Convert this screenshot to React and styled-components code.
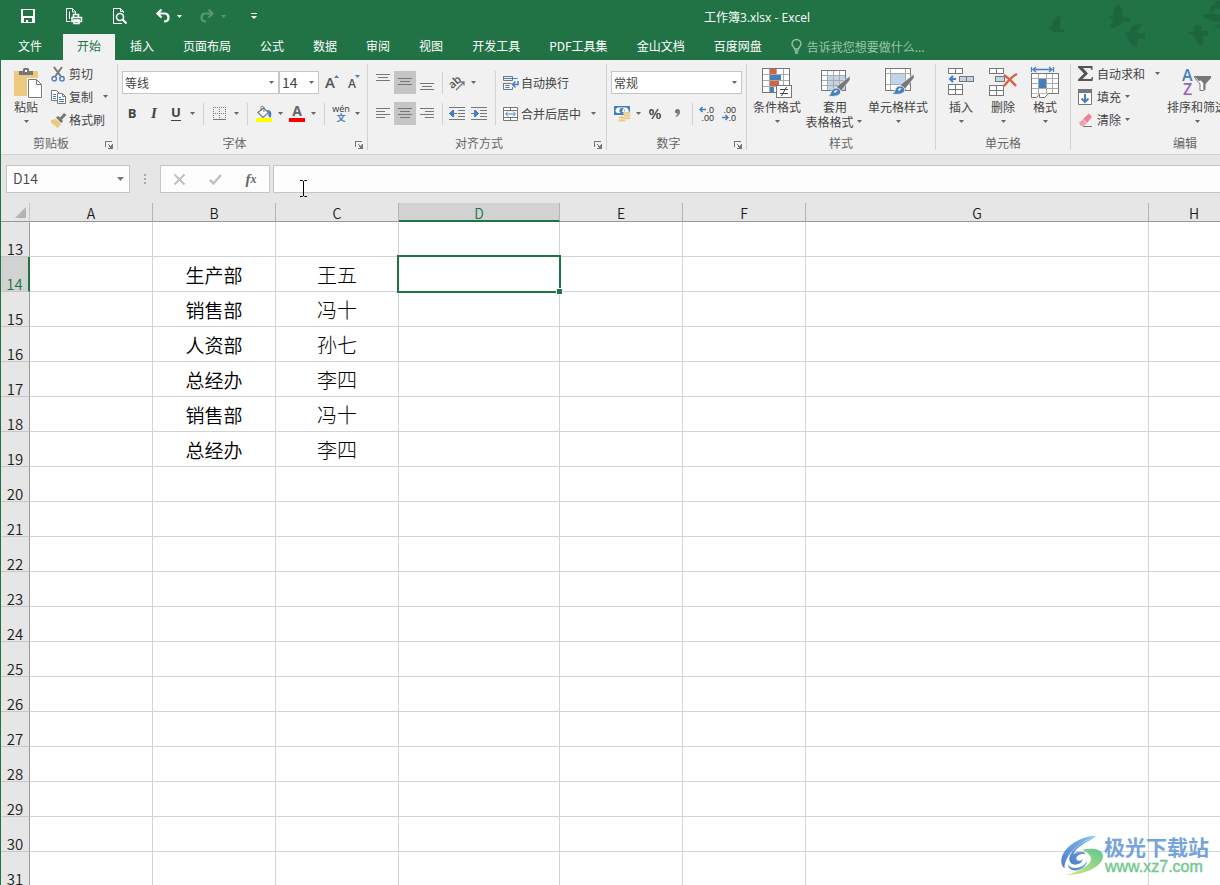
import React from "react"
import styled, { createGlobalStyle, css } from "styled-components"

const colors = {
  green: "#217346",
  greenDark: "#1d653e",
  ribbon: "#f1f1f1",
  chrome: "#e6e6e6",
  active: "#c5c5c5",
  header: "#d2d2d2",
  line: "#d4d4d4",
  border: "#c6c6c6",
  headerLine: "#999999",
  text: "#444444",
  label: "#666666",
  icon: "#777777",
  blue: "#4480bd",
  lightBlue: "#c0d4ea",
  sand: "#edc87e",
  red: "#d9603f",
}

const fonts = {
  ui: `"Noto Sans CJK SC", sans-serif`,
  title: `"Open Sans", "Noto Sans CJK SC", sans-serif`,
}

const GlobalStyle = createGlobalStyle`
  *, *::before, *::after {
    box-sizing: border-box;
  }

  body {
    margin: 0;
    font-family: ${fonts.ui};
    font-size: 12px;
    color: ${colors.text};
  }

  button, select, input {
    font: inherit;
    color: inherit;
    margin: 0;
    padding: 0;
    border: 0;
    border-radius: 0;
    background: none;
    outline: none;
  }

  svg {
    display: block;
    flex: none;
    overflow: visible;
  }
`

const Window = styled.div`
  position: relative;
  display: flex;
  flex-direction: column;
  height: 100vh;
  overflow: hidden;
  border-left: 1px solid ${colors.green};
  background: #ffffff;
`

const Header = styled.header`
  position: relative;
  flex: none;
  background: ${colors.green};
  color: #ffffff;
`

const Birds = styled.svg`
  position: absolute;
  top: 0;
  right: 0;
  overflow: hidden;
  fill: ${colors.greenDark};
`

const TitleBar = styled.div`
  position: relative;
  display: flex;
  align-items: center;
  height: 34px;
`

const QuickAccess = styled.div`
  display: flex;
  align-items: center;
  width: 293px;
  padding: 0 0 2px 14px;
  gap: 20px;
`

const QuickGroup = styled.div`
  display: flex;
  align-items: center;
  gap: 9px;
`

const QuickButton = styled.button`
  display: flex;
  align-items: center;
  justify-content: center;
  width: 26px;
  height: 24px;
`

const HistoryButton = styled.button`
  display: flex;
  align-items: center;
  gap: 4px;
  padding: 0 3px;
  height: 24px;
  opacity: ${props => (props.disabled ? 0.25 : 1)};
  color: #ffffff;
`

const DocTitle = styled.h1`
  flex: 1;
  margin: 0;
  font-family: ${fonts.title};
  font-size: 12px;
  font-weight: 400;
  text-align: center;
`

const Tabs = styled.nav`
  position: relative;
  display: flex;
  gap: 1px;
  height: 26px;
`

const Tab = styled.button`
  flex: none;
  padding: 0 14px 3px;
  line-height: 23px;

  ${props =>
    props.$file &&
    css`
      padding: 0 17px 3px;
      margin-right: 3px;
    `}

  ${props =>
    props.$active &&
    css`
      background: ${colors.ribbon};
      color: ${colors.green};
    `}
`

const TellMe = styled.button`
  display: flex;
  align-items: center;
  gap: 5px;
  padding: 0 0 1px 14px;
  line-height: 23px;
  color: #9cc3ab;
`

const RibbonBar = styled.div`
  display: flex;
  flex: none;
  height: 95px;
  overflow: hidden;
  background: ${colors.ribbon};
  border-bottom: 1px solid ${colors.header};
`

const Group = styled.section`
  display: flex;
  flex-direction: column;
  flex: none;
  width: ${props => props.$width}px;
  padding: 2px 0 3px;
`

const GroupBody = styled.div`
  display: flex;
  flex: 1;
  padding-left: ${props => props.$indent || 4}px;
`

const GroupFooter = styled.div`
  display: flex;
  align-items: center;
  height: 16px;
  color: ${colors.label};
`

const GroupLabel = styled.div`
  flex: 1;
  line-height: 16px;
  text-align: center;
`

const Launcher = styled.button`
  display: flex;
  justify-content: center;
  width: 16px;
  padding-top: 4px;
`

const Divider = styled.div`
  flex: none;
  width: 1px;
  margin: 4px 0;
  background: ${colors.header};
`

const BigButton = styled.button`
  display: flex;
  flex-direction: column;
  align-items: center;
  flex: none;
  width: ${props => props.$width}px;
  padding-top: 5px;
  line-height: 15px;
  white-space: nowrap;
`

const BigLine = styled.span`
  display: flex;
  align-items: center;
  height: 15px;
`

const Stack = styled.div`
  display: flex;
  flex-direction: column;
  align-items: flex-start;
  width: ${props => (props.$width ? `${props.$width}px` : "auto")};
  padding-left: ${props => props.$indent || 0}px;
`

const SmallButton = styled.button`
  display: flex;
  align-items: center;
  gap: ${props => props.$gap || 2}px;
  height: 23px;
  white-space: nowrap;
`

const Rows = styled.div`
  display: flex;
  flex-direction: column;
  gap: 8px;
  padding: 9px 0 0 ${props => props.$indent || 0}px;
`

const Row = styled.div`
  display: flex;
  align-items: center;
  height: 23px;
`

const ToolButton = styled.button`
  display: flex;
  align-items: center;
  justify-content: center;
  flex: none;
  width: 22px;
  height: 23px;
  padding-bottom: ${props => (props.$raised ? 2 : 0)}px;
  background: ${props => (props.$active ? colors.active : "none")};
`

const Letter = styled.span`
  font-family: "Open Sans", sans-serif;
  font-size: ${props => props.$size || 13}px;
  line-height: 16px;
  font-weight: ${props => (props.$regular ? 600 : 700)};
  border-bottom: ${props => (props.$underline ? "1px solid currentColor" : "0")};
`

const SerifLetter = styled(Letter)`
  font-family: "Liberation Serif", serif;
  font-style: italic;
`

const CaretBox = styled.span`
  display: flex;
  align-items: center;
  justify-content: center;
  flex: none;
  width: 11px;
  height: 15px;
  margin-left: ${props => props.$gap || 0}px;
`

const Rule = styled.div`
  flex: none;
  width: 1px;
  height: ${props => (props.$tall ? "54px" : "22px")};
  margin: ${props => (props.$tight ? "0 3px 0 4px" : "0 5px")};
  background: ${colors.header};
`

const RuleColumn = styled.div`
  padding-top: 9px;
`

const Combo = styled.label`
  display: grid;
  align-items: center;
  flex: none;
  width: ${props => props.$width}px;
  height: 23px;
  margin-left: ${props => props.$indent || 0}px;
  background: #ffffff;
  border: 1px solid ${colors.border};

  > * {
    grid-area: 1 / 1;
  }

  > span {
    justify-self: end;
    margin-right: 1px;
    pointer-events: none;
  }
`

const Select = styled.select`
  width: 100%;
  height: 21px;
  padding: 0 2px 1px;
  appearance: none;
  font-size: ${props => props.$size || 12}px;
`

const Spacer = styled.div`
  width: 3px;
`

const FormulaBar = styled.div`
  display: flex;
  flex: none;
  padding: 10px 0 10px 5px;
  background: ${colors.chrome};
`

const NameBox = styled.div`
  display: flex;
  align-items: center;
  width: 124px;
  height: 28px;
  padding-right: 5px;
  background: #fdfdfd;
  border: 1px solid ${colors.border};
`

const NameInput = styled.input`
  flex: 1;
  min-width: 0;
  padding: 0 0 2px 6px;
  font-size: 14px;
  font-weight: 350;
  line-height: 24px;
`

const Grip = styled.div`
  display: flex;
  align-items: center;
  justify-content: center;
  width: 30px;
`

const FormulaActions = styled.div`
  display: flex;
  width: 110px;
  height: 28px;
  margin-right: 3px;
  background: #fdfdfd;
  border: 1px solid ${colors.border};
`

const FormulaButton = styled.button`
  display: flex;
  align-items: center;
  justify-content: center;
  flex: 1;
  color: #666666;
`

const FormulaField = styled.div`
  position: relative;
  flex: 1;
  height: 28px;
  background: #fdfdfd;
  border: 1px solid ${colors.border};
  border-right: 0;
`

const FormulaInput = styled.input`
  width: 100%;
  height: 26px;
  padding: 0 8px;
  font-size: 14px;
`

const Pointer = styled.svg`
  position: absolute;
  left: 25px;
  top: 14px;
`

const Sheet = styled.main`
  flex: 1;
  min-height: 0;
  overflow: hidden;
`

const Grid = styled.table`
  width: max-content;
  min-width: 100%;
  table-layout: fixed;
  border-collapse: separate;
  border-spacing: 0;
  color: #1c1c1c;
`

const Corner = styled.th`
  padding: 0;
  background: ${colors.chrome};
  border-right: 1px solid ${colors.border};
  border-bottom: 1px solid ${colors.headerLine};

  svg {
    margin: 0 3px 0 auto;
  }
`

const ColumnHead = styled.th`
  height: 19px;
  padding: 2px 0 0;
  font-size: 14px;
  line-height: 15px;
  font-weight: 350;
  background: ${colors.chrome};
  border-right: 1px solid #b4b4b4;
  border-bottom: 1px solid ${colors.headerLine};

  ${props =>
    props.$active &&
    css`
      color: ${colors.green};
      background: ${colors.header};
      border-bottom: 2px solid ${colors.green};
      line-height: 14px;
    `}
`

const RowHead = styled.th`
  height: 35px;
  padding: 0;
  font-size: 15px;
  line-height: 15px;
  font-weight: 350;
  vertical-align: bottom;
  background: ${colors.chrome};
  border-right: 1px solid ${colors.headerLine};
  border-bottom: 1px solid #c8c8c8;

  ${props =>
    props.$active &&
    css`
      color: ${colors.green};
      background: ${colors.header};
      border-right: 2px solid ${colors.green};
    `}
`

const Cell = styled.td`
  position: relative;
  z-index: ${props => (props.$active ? 1 : 0)};
  height: 35px;
  padding: 2px 0 0;
  text-align: center;
  line-height: 28px;
  font-size: ${props => (props.$name ? 20 : 19)}px;
  font-weight: ${props => (props.$name ? 300 : 350)};
  color: #000000;
  border-right: 1px solid ${colors.line};
  border-bottom: 1px solid ${colors.line};
`

const Selection = styled.div`
  position: absolute;
  inset: -2px;
  border: 2px solid ${colors.green};

  &::after {
    content: "";
    position: absolute;
    right: -4px;
    bottom: -4px;
    width: 7px;
    height: 7px;
    background: ${colors.green};
    border: 1px solid #ffffff;
  }
`

const Watermark = styled.div`
  position: absolute;
  right: 11px;
  bottom: 8px;
  display: flex;
  align-items: center;
  opacity: 0.9;
`

const WatermarkText = styled.div`
  display: flex;
  flex-direction: column;
  font-size: 21px;
  line-height: 22px;
  font-weight: 700;
  color: #659bd8;
`

const WatermarkUrl = styled.a`
  padding-left: 1px;
  font-family: "Liberation Sans", sans-serif;
  font-size: 16px;
  line-height: 20px;
  font-weight: 400;
  text-decoration: none;
  color: #5fc482;
  -webkit-text-stroke: 0.4px #5fc482;
`

// ---- icons ----

const Caret = ({ gap, color = "#666666" }) => (
  <CaretBox $gap={gap}>
    <svg width="5" height="3" viewBox="0 0 5 3">
      <path d="M0 0h5L2.5 3z" fill={color} />
    </svg>
  </CaretBox>
)

const SaveIcon = () => (
  <svg width="14" height="14" viewBox="0 0 14 14" shapeRendering="crispEdges">
    <path fill="#fff" fillRule="evenodd" d="M0 0h14v14H0zM2 1v6h10V1zM3 9v4h2v-2h2v2h4V9z" />
  </svg>
)

const PrintIcon = () => (
  <svg width="16" height="16" viewBox="0 0 16 16" fill="none" stroke="#fff">
    <path d="M4.5 13.5h-4V.5h6l3 3V6M6.500 1v3H10M3.500 11V3.500" />
    <path d="M7.500 9V6.500h5V9M6 9.500h9.500v4H6zM8 12h5v3.500H8z" strokeWidth="1.500" />
  </svg>
)

const PreviewIcon = () => (
  <svg width="15" height="16" viewBox="0 0 15 16" fill="none" stroke="#fff">
    <path d="M3 15.500H.5V.5h7l3 3V5M7.500.5v3h3M3 15.500h6" />
    <circle cx="7" cy="9" r="3.500" strokeWidth="1.600" />
    <path d="M9.500 11.500l4 4" strokeWidth="2.200" />
  </svg>
)

const UndoIcon = ({ flip }) => (
  <svg width="14" height="14" viewBox="0 0 14 14">
    <g transform={flip ? "matrix(-1 0 0 1 14 0)" : undefined} fill="none" stroke="#fff">
      <path d="M1.500 4.500H9a4 4 0 0 1 3.500 4c0 2.500-2 4-4.500 4" strokeWidth="2.200" />
      <path d="M5.500.5l-4 4 4 4" strokeWidth="2.200" />
    </g>
  </svg>
)

const CustomizeIcon = () => (
  <svg width="6" height="7" viewBox="0 0 6 7" fill="#fff">
    <path d="M0 0h6v1H0zM0 3h6L3 6z" />
  </svg>
)

const BulbIcon = () => (
  <svg width="11" height="15" viewBox="0 0 11 15" fill="none" stroke="#9cc3ab" strokeWidth="1.400">
    <path d="M3.500 10C3.500 8 1 7.500 1 5a4.500 4.500 0 0 1 9 0c0 2.500-2.500 3-2.500 5zM3.500 12h4M4 14h3" />
  </svg>
)

const LauncherIcon = () => (
  <svg width="8" height="8" viewBox="0 0 8 8" shapeRendering="crispEdges" fill={colors.icon}>
    <path d="M0 0h7v1H1v5H0zM3 3h1v1H3zM4 4h1v1H4zM7 3h1v5H3V7h2V6H4V5h2V4h1z" />
  </svg>
)

const PasteIcon = () => (
  <svg width="32" height="32" viewBox="0 0 32 32">
    <path fill={colors.sand} d="M4 4h24v25H4z" />
    <path fill={colors.icon} d="M9 4h4V2l1-1h4l1 1v2h4v4H9z" />
    <path fill="#fff" d="M15 3h2v2h-2z" />
    <path fill="#fff" stroke="#fff" strokeWidth="3" d="M18.500 12.500h8l5 5v13h-13z" />
    <path fill="#fff" stroke={colors.icon} d="M18.500 12.500h8l5 5v13h-13zM26.500 12.500v5h5" />
  </svg>
)

const CutIcon = () => (
  <svg width="16" height="16" viewBox="0 0 16 16" fill="none">
    <path d="M3 1l6.500 9M11 1L4.500 10" stroke={colors.icon} strokeWidth="2" />
    <circle cx="3.200" cy="12.700" r="2.200" stroke={colors.blue} strokeWidth="1.400" />
    <circle cx="11" cy="12.700" r="2.200" stroke={colors.blue} strokeWidth="1.400" />
  </svg>
)

const CopyIcon = () => (
  <svg width="16" height="16" viewBox="0 0 16 16" fill="#fff" stroke={colors.icon}>
    <path d="M.5 1.500h5l3 3v7h-8z" />
    <path d="M2 5.500h3M2 7.500h3M2 9.500h3" stroke={colors.blue} />
    <path d="M6.500 4.500h5l3 3v7h-8zM11.500 4.500v3h3" />
    <path d="M8 8.500h2M8 10.500h5M8 12.500h5" stroke={colors.blue} />
  </svg>
)

const PainterIcon = () => (
  <svg width="16" height="16" viewBox="0 0 16 16">
    <path fill={colors.sand} d="M0 8l5-1 5 5-3 4-2-1-1-2-1 1-1-2-2-1z" />
    <path fill={colors.icon} d="M5 5.500L7 4l2 1.500L13 1l2.500 2L11 7.500l1 2-2 1.500z" />
  </svg>
)

const GrowFontIcon = ({ small }) => (
  <svg width="16" height="20" viewBox="0 0 16 20">
    <text x={small ? 1 : 0} y="15" fontFamily="Open Sans" fontSize={small ? 12 : 15} fontWeight="600" fill="#555">
      A
    </text>
    <path d={small ? "M8 2h5l-2.500 3z" : "M9 5h5l-2.500-3z"} fill={colors.blue} />
  </svg>
)

const BordersIcon = () => (
  <svg width="14" height="14" viewBox="0 0 14 14" shapeRendering="crispEdges" stroke={colors.icon}>
    <path d="M0 .5h13M0 6.500h13M.5 0v12M6.500 0v12M12.500 0v12" strokeDasharray="1 1" />
    <path d="M0 12.500h13" />
  </svg>
)

const FillIcon = () => (
  <svg width="16" height="16" viewBox="0 0 16 16">
    <path d="M11 4c4 0 5.500 3 3.500 7.500-2 0-2.500-2-2-4z" fill={colors.blue} />
    <path d="M2 6.500L7.500 2l5 4.500-5.500 5z" fill="#fff" stroke={colors.icon} strokeWidth="1.200" />
    <path d="M5 5V1.500C5 0 8 0 8 1.500V6" fill="none" stroke={colors.icon} />
    <path d="M0 12h16v4H0z" fill="#ffff00" />
  </svg>
)

const FontColorIcon = () => (
  <svg width="16" height="17" viewBox="0 0 16 17">
    <text x="8" y="11" textAnchor="middle" fontFamily="Open Sans" fontSize="14" fontWeight="700" fill="#666">
      A
    </text>
    <path d="M0 13h16v4H0z" fill="#ff0000" />
  </svg>
)

const PhoneticIcon = () => (
  <svg width="18" height="18" viewBox="0 0 18 18">
    <text x="9" y="7" textAnchor="middle" fontFamily="Open Sans" fontSize="9" fill="#333">
      wén
    </text>
    <text x="9" y="16" textAnchor="middle" fontFamily="Noto Sans CJK SC" fontSize="9" fontWeight="700" fill={colors.blue}>
      文
    </text>
  </svg>
)

const horizontalLines = {
  left: "M0 .5h14M0 3.500h9M0 6.500h14M0 9.500h9",
  center: "M0 .5h14M2 3.500h10M0 6.500h14M2 9.500h10",
  right: "M0 .5h14M5 3.500h9M0 6.500h14M5 9.500h9",
}

const verticalLines = {
  top: "M0 2.500h14M2 5.500h10M0 8.500h14",
  middle: "M0 6.500h14M2 9.500h10M0 12.500h14",
  bottom: "M0 11.500h14M2 14.500h10M0 17.500h14",
}

const AlignIcon = ({ kind }) => (
  <svg
    width="14"
    height={verticalLines[kind] ? 21 : 11}
    shapeRendering="crispEdges"
    stroke={colors.icon}
  >
    <path d={verticalLines[kind] || horizontalLines[kind]} />
  </svg>
)

const OrientationIcon = () => (
  <svg width="18" height="18" viewBox="0 0 18 18">
    <text x="2" y="13" transform="rotate(-42 6 11)" fontFamily="Open Sans" fontSize="11" fontWeight="600" fill="#555">
      ab
    </text>
    <path d="M8 16l7.500-7.500M12.500 8H16v3.500" stroke={colors.icon} strokeWidth="1.300" fill="none" />
  </svg>
)

const IndentIcon = ({ more }) => (
  <svg width="16" height="13" viewBox="0 0 16 13" shapeRendering="crispEdges">
    <path d="M0 .5h16M9 3.500h7M9 6.500h7M9 9.500h7M0 12.500h16" stroke={colors.icon} />
    <path
      d={more ? "M0 6h3V3h2l3 3.500L5 10H3V7H0z" : "M8 6H5V3H3L0 6.500 3 10h2V7h3z"}
      fill={colors.blue}
    />
  </svg>
)

const WrapIcon = () => (
  <svg width="16" height="16" viewBox="0 0 16 16" fill="none">
    <path d="M.5 1v4.500h9V4M.5 8v6.500h9V12M.5 1.500H9.500V3M.5 8.500h8" stroke={colors.icon} />
    <path d="M1 3.500h13.500M2.500 10.500h4M2.500 12.500h4" stroke={colors.blue} />
    <path d="M15 6v3.500h-5M12.500 6.500l-3 3 3 3" stroke={colors.blue} strokeWidth="1.500" />
  </svg>
)

const MergeIcon = () => (
  <svg width="16" height="16" viewBox="0 0 16 16" fill="#fff" stroke={colors.icon}>
    <path d="M.5 1.500h14v13H.5zM.5 4.500h14M.5 11.500h14M7.500 1.500v3M7.500 11.500v3" />
    <path d="M3 8h9M5 5.500L2.500 8 5 10.500M10 5.500L12.500 8 10 10.500" stroke={colors.blue} fill="none" />
  </svg>
)

const CurrencyIcon = () => (
  <svg width="17" height="16" viewBox="0 0 17 16">
    <path d="M0 0h16v9H0z" fill={colors.blue} />
    <path d="M1.500 2h1v-.5h11V2h1v5H1.500z" fill="#fff" />
    <path d="M1 1h3L1 4zM15 1h-3l3 3zM1 8V5l3 3z" fill={colors.blue} />
    <circle cx="8" cy="4.500" r="2.600" fill={colors.blue} />
    <path d="M9 3h1v3H8z" fill="#fff" />
    <g fill={colors.sand} stroke={colors.ribbon} strokeWidth=".6">
      <ellipse cx="13" cy="12" rx="3.600" ry="1.600" />
      <ellipse cx="13" cy="9.500" rx="3.600" ry="1.600" />
      <ellipse cx="13" cy="7" rx="3.600" ry="1.600" />
      <ellipse cx="8" cy="14.200" rx="3.600" ry="1.600" />
      <ellipse cx="8" cy="11.500" rx="3.600" ry="1.600" />
    </g>
  </svg>
)

const CommaIcon = () => (
  <svg width="5" height="8" viewBox="0 0 5 8">
    <path d="M2.500 0C4 0 5 1 5 2.800 5 5.500 3.500 7.300.8 8V6.800C2 6.300 2.700 5.600 2.800 4.600 1.200 4.800 0 3.900 0 2.400 0 1 1 0 2.500 0z" fill={colors.icon} />
  </svg>
)

const DecimalIcon = ({ less }) => (
  <svg width="16" height="16" viewBox="0 0 16 16">
    <g fontFamily="Liberation Sans" fontSize="9" fill="#333" textAnchor="end">
      <text x="15" y="7">{less ? ".00" : ".0"}</text>
      <text x="15" y="15">{less ? ".0" : ".00"}</text>
    </g>
    <path
      d={less ? "M1 11.500h6M4.500 9l2.500 2.500L4.500 14" : "M7 3.500H1M3.500 1L1 3.500 3.500 6"}
      fill="none"
      stroke={colors.blue}
      strokeWidth="1.500"
    />
  </svg>
)

const Brush = ({ x, y }) => (
  <g transform={`translate(${x} ${y})`}>
    <path d="M22 1v4L13 16l-5-4z" fill={colors.icon} stroke={colors.ribbon} strokeWidth=".6" />
    <path d="M0 21c4-1 2-8 8-8 3 0 5 2 4.500 4.500C12 21 6 22 0 21z" fill={colors.blue} stroke={colors.ribbon} strokeWidth=".8" />
    <path d="M6 17c0-2 3-2.500 4-1-2 0-2 2-3 2z" fill="#fff" />
  </g>
)

const ConditionalIcon = () => (
  <svg width="30" height="32" viewBox="0 0 30 32" shapeRendering="crispEdges">
    <path fill="#fff" stroke={colors.icon} d="M.5 1.500h27v24H.5z" />
    <path stroke="#aaa" d="M1 7.500h26M1 13.500h26M1 19.500h26M7.500 2v23M14.500 2v23M21.500 2v23" />
    <path fill={colors.red} d="M8 2h6v5H8zM8 14h9v5H8z" />
    <path fill={colors.blue} d="M8 8h11v5H8zM8 20h4v5H8z" />
    <path fill="#fff" stroke={colors.icon} d="M14.500 18.500h15v12h-15z" />
    <path shapeRendering="auto" fill="none" stroke="#444" d="M18 22.500h8M18 26.500h8M24.500 20l-5 9" />
  </svg>
)

const TableStyleIcon = () => (
  <svg width="30" height="32" viewBox="0 0 30 32">
    <g shapeRendering="crispEdges">
      <path fill="#fff" d="M1 3h24v21H1z" />
      <path fill={colors.lightBlue} d="M7 9h18v15H7z" />
      <path fill="none" stroke="#aaa" d="M1 8.500h24M1 13.500h24M1 18.500h24M7.500 3v21M13.500 3v21M19.500 3v21" />
      <path fill="none" stroke={colors.icon} d="M1.500 3.500h24v20h-24z" />
    </g>
    <Brush x="8" y="8" />
  </svg>
)

const CellStyleIcon = () => (
  <svg width="30" height="32" viewBox="0 0 30 32">
    <g shapeRendering="crispEdges">
      <path fill="#fff" stroke={colors.icon} d="M2.500 1.500h25v22h-25z" />
      <path fill="none" stroke="#aaa" d="M3 6.500h24M3 17.500h24M7.500 2v21M22.500 2v21" />
      <path fill={colors.lightBlue} d="M8 7h14v10H8z" />
    </g>
    <Brush x="9" y="6" />
  </svg>
)

const InsertIcon = () => (
  <svg width="28" height="32" viewBox="0 0 28 32" fill="#fff" stroke={colors.icon}>
    <g shapeRendering="crispEdges">
      <path d="M1.500 1.500h14v5h-14zM8.500 1.500v5M1.500 17.500h14v10h-14zM8.500 17.500v10M1.500 22.500h14" />
      <path d="M12.500 9.500h14v5h-14zM19.500 9.500v5" fill={colors.lightBlue} />
    </g>
    <path d="M9 12H3M6 9l-3 3 3 3" stroke={colors.blue} strokeWidth="2" fill="none" />
  </svg>
)

const DeleteIcon = () => (
  <svg width="30" height="32" viewBox="0 0 30 32" fill="#fff" stroke={colors.icon}>
    <g shapeRendering="crispEdges">
      <path d="M1.500 1.500h14v5h-14zM8.500 1.500v5M1.500 18.500h14v10h-14zM8.500 18.500v10M1.500 23.500h14" />
      <path d="M7.500 9.500h9v5h-9z" fill={colors.lightBlue} />
    </g>
    <path d="M16 8c3 2 8 6 12 11M29 7c-5 2-9 7-13 12" stroke={colors.red} strokeWidth="2.400" fill="none" />
  </svg>
)

const FormatIcon = () => (
  <svg width="28" height="32" viewBox="0 0 28 32" fill="#fff" stroke={colors.icon}>
    <path d="M.5 0v5M22.500 0v5M2 2.500h19M5 0L2 2.500 5 5M18 0l3 2.500L18 5" stroke={colors.blue} strokeWidth="1.300" fill="none" />
    <g shapeRendering="crispEdges">
      <path d="M.5 6.500h27v20H.5z" />
      <path d="M1 11.500h26M1 21.500h26M7.500 7v19M15.500 7v19M21.500 7v19M1 16.500h6M16 16.500h11" stroke="#aaa" />
      <path d="M8 12h7v9H8z" fill={colors.blue} stroke="none" />
    </g>
    <path d="M.5 26.500v4h5l3-3.500v3.500h5l4-4" />
  </svg>
)

const SumIcon = () => (
  <svg width="16" height="16" viewBox="0 0 16 16">
    <path d="M0 0h14.500v4h-1l-1-2H5l5 5.500L4.500 13h8.500l1-2h1l-.5 4H0v-1.500l6-6L0 1.500z" fill="#555" />
  </svg>
)

const DownIcon = () => (
  <svg width="16" height="16" viewBox="0 0 16 16">
    <path d="M.5.5h13v15H.5z" fill="#fff" stroke={colors.icon} />
    <path d="M0 0h14v4H0z" fill={colors.icon} />
    <path d="M7 5v8M3.500 9.500L7 13l3.500-3.500" fill="none" stroke={colors.blue} strokeWidth="2" />
  </svg>
)

const EraserIcon = () => (
  <svg width="16" height="16" viewBox="0 0 16 16">
    <path d="M5 7l6-5.500 3 3.500-5 6z" fill="#ea8699" />
    <path d="M4.500 7.500L8.500 11.500 5.500 14H3l-2-3z" fill="#ee9eae" />
    <path d="M5 14.500h9" stroke={colors.icon} />
  </svg>
)

const SortIcon = () => (
  <svg width="32" height="32" viewBox="0 0 32 32">
    <g fontFamily="Open Sans" fontSize="16" fontWeight="600">
      <text x="1" y="14" fill={colors.blue}>A</text>
      <text x="2" y="28" fill="#9b60bd">Z</text>
    </g>
    <path d="M13.500 9.500h15v1L23 17v6.500h-4V17l-5.500-6.500z" fill="#fff" stroke={colors.icon} />
    <path d="M13 9h17v2l-5.500 6v6l-2-1v-5.500L20 13.500 18 14z" fill={colors.icon} />
  </svg>
)

const BirdShapes = () => (
  <Birds width="260" height="60" viewBox="0 0 780 180" aria-hidden="true">
    <path d="M262 79l15 3c0-18 6-28 24-38l-2 42 13 3v7l-18-1-8 4-12-8z" />
    <path d="M473 12c12 8 16 22 14 40l24 3-3 11-20-2c-8 14-20 22-38 20l9-23-13-13 14 2c0-18 4-30 13-38z" />
    <path d="M493 97l18 1c0-18 12-28 36-26l-15 20 2 10 20-2v16l-18-2c-4 8-6 16-3 27-18-5-28-16-30-30z" />
    <path d="M686 94l18 3c-6-14-2-22 10-22 10 2 12 8 12 18l18-1v15l-14 1c0 12-2 22-4 31-14-8-22-20-24-35l-16-2z" />
    <path d="M723 45c18-6 36-6 57 0v22c-20-1-38-8-57-22zM750 38c-2-16 4-24 18-26l-8-8 20-2v24l-12 2zM762 82l18-14v18z" />
  </Birds>
)

const LogoIcon = () => (
  <svg width="43" height="42" viewBox="0 0 129 126">
    <defs>
      <linearGradient id="logoBlue" x1="0" y1="1" x2="1" y2="0">
        <stop offset="0" stopColor="#3d6fc4" />
        <stop offset="1" stopColor="#73bdf0" />
      </linearGradient>
      <linearGradient id="logoGreen" x1="0" y1="1" x2="1" y2="0">
        <stop offset="0" stopColor="#d5e86a" />
        <stop offset="1" stopColor="#4dc186" />
      </linearGradient>
    </defs>
    <path d="M108 2C48 4 2 42 1 78c0 12 4 18 10 22C8 66 50 20 108 2z" fill="url(#logoBlue)" />
    <path d="M108 4C62 18 26 48 25 72c0 16 18 22 33 12 4-3 8-8 6-12-2 6-16 8-18 0-1-10 14-18 28-14-2-10-26-10-36 0C44 36 80 20 108 4z" fill="url(#logoBlue)" />
    <path d="M64 44c28-6 62-4 62 20 0 30-56 58-114 56 34-8 74-24 78-46 1-14-12-22-26-30z" fill="url(#logoGreen)" />
    <path d="M20 88c10 18 48 14 58-12 1 22-26 36-46 28-7-3-11-9-12-16z" fill="url(#logoBlue)" />
  </svg>
)

// ---- ribbon ----

const tabs = [
  "文件",
  "开始",
  "插入",
  "页面布局",
  "公式",
  "数据",
  "审阅",
  "视图",
  "开发工具",
  "PDF工具集",
  "金山文档",
  "百度网盘",
]

const RibbonGroup = ({ width, label, launcher, indent, children }) => (
  <Group $width={width}>
    <GroupBody $indent={indent}>{children}</GroupBody>
    <GroupFooter>
      <GroupLabel>{label}</GroupLabel>
      {launcher && (
        <Launcher aria-label={label}>
          <LauncherIcon />
        </Launcher>
      )}
    </GroupFooter>
  </Group>
)

const Big = ({ width, icon, label, second }) => (
  <BigButton $width={width}>
    {icon}
    <BigLine>{label}</BigLine>
    <BigLine>
      {second}
      <Caret />
    </BigLine>
  </BigButton>
)

const Small = ({ icon, label, caret, gap }) => (
  <SmallButton $gap={gap}>
    {icon}
    <span>{label}</span>
    {caret !== undefined && <Caret gap={caret} />}
  </SmallButton>
)

const Dropdown = ({ label, value, width, size, indent }) => (
  <Combo $width={width} $indent={indent}>
    <Select aria-label={label} defaultValue={value} $size={size}>
      <option>{value}</option>
    </Select>
    <Caret />
  </Combo>
)

const Ribbon = () => (
  <RibbonBar>
    <RibbonGroup width={116} label="剪贴板" launcher indent={5}>
      <Big width={40} icon={<PasteIcon />} label="粘贴" />
      <Stack $indent={5}>
        <Small icon={<CutIcon />} label="剪切" />
        <Small icon={<CopyIcon />} label="复制" caret={5} />
        <Small icon={<PainterIcon />} label="格式刷" />
      </Stack>
    </RibbonGroup>
    <Divider />
    <RibbonGroup width={249} label="字体" launcher indent={3}>
      <Rows>
        <Row>
          <Dropdown label="字体" value="等线" width={157} indent={1} />
          <Dropdown label="字号" value="14" width={40} size={14} />
          <Spacer />
          <ToolButton aria-label="增大字号"><GrowFontIcon /></ToolButton>
          <ToolButton aria-label="减小字号"><GrowFontIcon small /></ToolButton>
        </Row>
        <Row>
          <ToolButton $raised><Letter>B</Letter></ToolButton>
          <ToolButton $raised><SerifLetter $size={15}>I</SerifLetter></ToolButton>
          <ToolButton $raised><Letter $underline>U</Letter></ToolButton>
          <Caret />
          <Rule />
          <ToolButton aria-label="边框"><BordersIcon /></ToolButton>
          <Caret />
          <Rule />
          <ToolButton aria-label="填充颜色"><FillIcon /></ToolButton>
          <Caret />
          <ToolButton aria-label="字体颜色"><FontColorIcon /></ToolButton>
          <Caret />
          <Rule />
          <ToolButton aria-label="拼音"><PhoneticIcon /></ToolButton>
          <Caret />
        </Row>
      </Rows>
    </RibbonGroup>
    <Divider />
    <RibbonGroup width={238} label="对齐方式" launcher>
      <Rows>
        <Row>
          <ToolButton aria-label="顶端对齐"><AlignIcon kind="top" /></ToolButton>
          <ToolButton aria-label="垂直居中" $active><AlignIcon kind="middle" /></ToolButton>
          <ToolButton aria-label="底端对齐"><AlignIcon kind="bottom" /></ToolButton>
          <Rule $tight />
          <ToolButton aria-label="方向"><OrientationIcon /></ToolButton>
          <Caret />
        </Row>
        <Row>
          <ToolButton aria-label="左对齐"><AlignIcon kind="left" /></ToolButton>
          <ToolButton aria-label="居中" $active><AlignIcon kind="center" /></ToolButton>
          <ToolButton aria-label="右对齐"><AlignIcon kind="right" /></ToolButton>
          <Rule $tight />
          <ToolButton aria-label="减少缩进量"><IndentIcon /></ToolButton>
          <ToolButton aria-label="增加缩进量"><IndentIcon more /></ToolButton>
        </Row>
      </Rows>
      <RuleColumn>
        <Rule $tall />
      </RuleColumn>
      <Rows $indent={2}>
        <Row>
          <Small icon={<WrapIcon />} label="自动换行" />
        </Row>
        <Row>
          <Small icon={<MergeIcon />} label="合并后居中" caret={5} />
        </Row>
      </Rows>
    </RibbonGroup>
    <Divider />
    <RibbonGroup width={139} label="数字" launcher>
      <Rows>
        <Row>
          <Dropdown label="数字格式" value="常规" width={131} />
        </Row>
        <Row>
          <ToolButton aria-label="会计数字格式"><CurrencyIcon /></ToolButton>
          <Caret />
          <ToolButton $raised><Letter $size={15} $regular>%</Letter></ToolButton>
          <ToolButton $raised aria-label="千位分隔样式"><CommaIcon /></ToolButton>
          <Rule $tight />
          <ToolButton aria-label="增加小数位数"><DecimalIcon /></ToolButton>
          <ToolButton aria-label="减少小数位数"><DecimalIcon less /></ToolButton>
        </Row>
      </Rows>
    </RibbonGroup>
    <Divider />
    <RibbonGroup width={188} label="样式">
      <Big width={52} icon={<ConditionalIcon />} label="条件格式" />
      <Big width={64} icon={<TableStyleIcon />} label="套用" second="表格格式" />
      <Big width={62} icon={<CellStyleIcon />} label="单元格样式" />
    </RibbonGroup>
    <Divider />
    <RibbonGroup width={134} label="单元格">
      <Big width={42} icon={<InsertIcon />} label="插入" />
      <Big width={42} icon={<DeleteIcon />} label="删除" />
      <Big width={42} icon={<FormatIcon />} label="格式" />
    </RibbonGroup>
    <Divider />
    <RibbonGroup width={228} label="编辑" indent={7}>
      <Stack $width={88}>
        <Small icon={<SumIcon />} label="自动求和" caret={4} gap={3} />
        <Small icon={<DownIcon />} label="填充" caret={-2} gap={3} />
        <Small icon={<EraserIcon />} label="清除" caret={-2} gap={3} />
      </Stack>
      <Big width={62} icon={<SortIcon />} label="排序和筛选" />
    </RibbonGroup>
  </RibbonBar>
)

// ---- sheet ----

const columns = [
  { name: "A", width: 123 },
  { name: "B", width: 123 },
  { name: "C", width: 123 },
  { name: "D", width: 161 },
  { name: "E", width: 123 },
  { name: "F", width: 123 },
  { name: "G", width: 343 },
  { name: "H", width: 91 },
]

const data = {
  14: { B: "生产部", C: "王五" },
  15: { B: "销售部", C: "冯十" },
  16: { B: "人资部", C: "孙七" },
  17: { B: "总经办", C: "李四" },
  18: { B: "销售部", C: "冯十" },
  19: { B: "总经办", C: "李四" },
}

const rows = Array.from({ length: 19 }, (_, i) => i + 13)
const active = { column: "D", row: 14 }

const Spreadsheet = () => (
  <Sheet>
    <Grid>
      <colgroup>
        <col width="29" />
        {columns.map(column => (
          <col key={column.name} width={column.width} />
        ))}
      </colgroup>
      <thead>
        <tr>
          <Corner aria-label="全选">
            <svg width="11" height="11" viewBox="0 0 11 11">
              <path d="M11 0v11H0z" fill="#b4b4b4" />
            </svg>
          </Corner>
          {columns.map(column => (
            <ColumnHead key={column.name} $active={column.name === active.column}>
              {column.name}
            </ColumnHead>
          ))}
        </tr>
      </thead>
      <tbody>
        {rows.map(row => (
          <tr key={row}>
            <RowHead $active={row === active.row}>{row}</RowHead>
            {columns.map(({ name }) => {
              const selected = row === active.row && name === active.column
              return (
                <Cell key={name} $name={name === "C"} $active={selected}>
                  {data[row] && data[row][name]}
                  {selected && <Selection />}
                </Cell>
              )
            })}
          </tr>
        ))}
      </tbody>
    </Grid>
  </Sheet>
)

const App = () => (
  <Window>
    <GlobalStyle />
    <Header>
      <BirdShapes />
      <TitleBar>
        <QuickAccess>
          <QuickButton aria-label="保存"><SaveIcon /></QuickButton>
          <QuickButton aria-label="快速打印"><PrintIcon /></QuickButton>
          <QuickButton aria-label="打印预览"><PreviewIcon /></QuickButton>
          <QuickGroup>
            <HistoryButton aria-label="撤消"><UndoIcon /><Caret color="#fff" /></HistoryButton>
            <HistoryButton aria-label="恢复" disabled><UndoIcon flip /><Caret color="#fff" /></HistoryButton>
            <QuickButton aria-label="自定义快速访问工具栏"><CustomizeIcon /></QuickButton>
          </QuickGroup>
        </QuickAccess>
        <DocTitle>工作簿3.xlsx - Excel</DocTitle>
      </TitleBar>
      <Tabs>
        {tabs.map((tab, i) => (
          <Tab key={tab} $file={i === 0} $active={i === 1}>
            {tab}
          </Tab>
        ))}
        <TellMe>
          <BulbIcon />
          告诉我您想要做什么...
        </TellMe>
      </Tabs>
    </Header>
    <Ribbon />
    <FormulaBar>
      <NameBox>
        <NameInput aria-label="名称框" defaultValue="D14" />
        <svg width="7" height="4" viewBox="0 0 7 4">
          <path d="M0 0h7L3.500 4z" fill="#777" />
        </svg>
      </NameBox>
      <Grip>
        <svg width="2" height="10" viewBox="0 0 2 10" fill="#aaa">
          <path d="M0 0h2v2H0zM0 4h2v2H0zM0 8h2v2H0z" />
        </svg>
      </Grip>
      <FormulaActions>
        <FormulaButton aria-label="取消">
          <svg width="11" height="11" viewBox="0 0 11 11" stroke="#c0c0c0" strokeWidth="2">
            <path d="M.5.5l10 10M10.500.5l-10 10" />
          </svg>
        </FormulaButton>
        <FormulaButton aria-label="输入">
          <svg width="13" height="11" viewBox="0 0 13 11" fill="none" stroke="#c0c0c0" strokeWidth="2.500">
            <path d="M1 6l3.500 3.500L12 1" />
          </svg>
        </FormulaButton>
        <FormulaButton>
          <SerifLetter $size={15}>f</SerifLetter>
          <SerifLetter $size={12}>x</SerifLetter>
        </FormulaButton>
      </FormulaActions>
      <FormulaField>
        <FormulaInput aria-label="编辑栏" />
        <Pointer width="9" height="17" viewBox="0 0 9 17" fill="none" stroke="#000">
          <path d="M1 .5h2.500L4.500 1.500 5.500.5H8M4.500 1v15M1 16.500h2.500l1-1 1 1H8" />
        </Pointer>
      </FormulaField>
    </FormulaBar>
    <Spreadsheet />
    <Watermark>
      <LogoIcon />
      <WatermarkText>
        极光下载站
        <WatermarkUrl href="#">www.xz7.com</WatermarkUrl>
      </WatermarkText>
    </Watermark>
  </Window>
)

export default App
